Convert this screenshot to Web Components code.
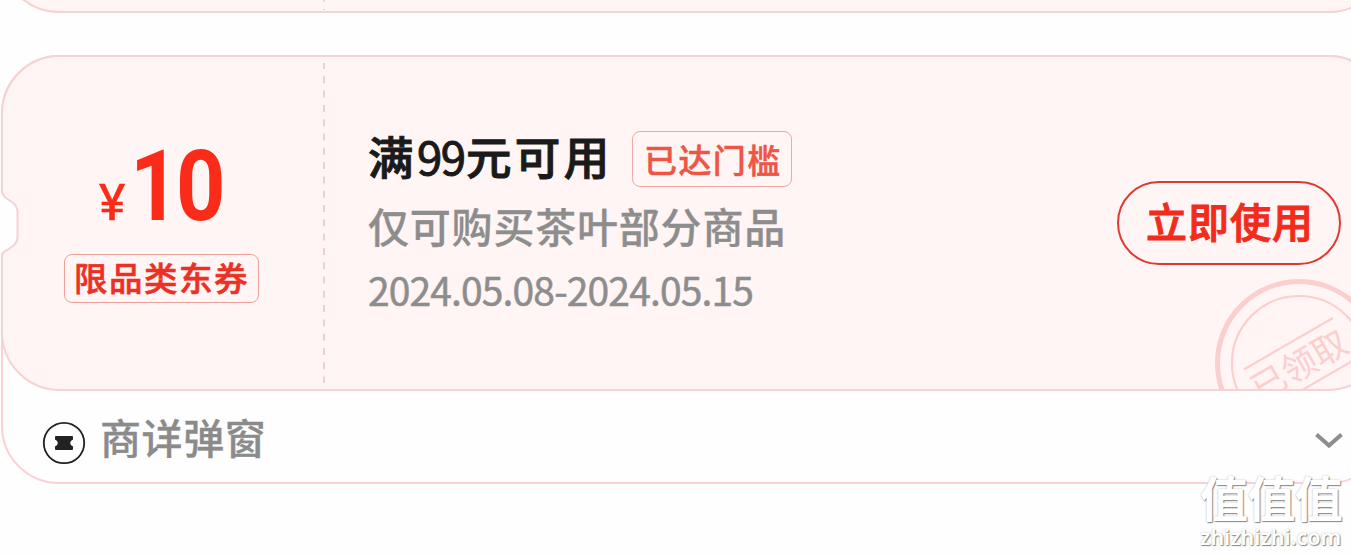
<!DOCTYPE html>
<html lang="zh-CN">
<head>
<meta charset="UTF-8">
<title>优惠券</title>
<style>
  body {
    margin: 0;
    width: 1351px;
    height: 555px;
    overflow: hidden;
    background: #fefefe;
    font-family: 'Noto Sans CJK SC', 'Noto Sans', sans-serif;
  }
  coupon-info b {
    display: inline-block;
    width: 49px;
    font-weight: 400;
    letter-spacing: -1.3px;
  }
</style>
</head>
<body>
<coupon-list>
  <coupon-card class="previous"></coupon-card>
  <coupon-card>
    <coupon-amount slot="amount" value="10">限品类东券</coupon-amount>
    <coupon-info slot="info">
      <span slot="title">满<b>99</b>元可用</span>
      <span slot="status">已达门槛</span>
      <span slot="scope">仅可购买茶叶部分商品</span>
      <span slot="date">2024.05.08-2024.05.15</span>
    </coupon-info>
    <coupon-button slot="action">立即使用</coupon-button>
    <coupon-stamp slot="stamp">已领取</coupon-stamp>
    <coupon-source slot="footer">商详弹窗</coupon-source>
  </coupon-card>
  <site-mark slot="mark"></site-mark>
</coupon-list>

<script>
/**
 * Small base class: renders the static template of an element.
 */
class BaseElement extends HTMLElement {
  connectedCallback() {
    if (this.shadowRoot) return;
    this.attachShadow({ mode: 'open' });
    this.shadowRoot.innerHTML = `<style>${this.getStyles()}</style>${this.getMarkup()}`;
  }
}

/** <coupon-list>: vertical stack of coupons, the first one scrolled off the top. */
class CouponList extends BaseElement {
  getStyles() {
    return `
      :host { display: block; position: relative; width: 1351px; height: 555px; overflow: hidden; }
      .stack { display: flex; flex-direction: column; gap: 42px; margin-top: -416px; }
    `;
  }
  getMarkup() {
    return '<div class="stack"><slot></slot></div><slot name="mark"></slot>';
  }
}

/** <coupon-card>: ticket shape, dashed divider and footer tray. */
class CouponCard extends BaseElement {
  getStyles() {
    return `
      :host {
        display: block;
        flex: none;
        position: relative;
        box-sizing: border-box;
        margin-left: 1px;
        width: 1386px;
        height: 429px;
        border: 2px solid #fbd1d6;
        border-radius: 58px;
      }
      .shape { position: absolute; left: -2px; top: -2px; }
      .ticket {
        display: grid;
        grid-template-columns: 321px 788px 1fr;
        position: relative;
        height: 332px;
        overflow: hidden;
      }
      .ticket > div { display: flex; }
      .footer { position: relative; height: 93px; }
      :host(.previous) .footer { display: none; }
    `;
  }
  getMarkup() {
    const previous = this.classList.contains('previous');
    const shape = previous
      ? '<rect x="1" y="1" width="1384" height="427" rx="57"/>'
      : `<path d="M59 1H1327A58 58 0 0 1 1385 59V277A58 58 0 0 1 1327 335H59A58 58 0 0 1 1 277V202Q1 197 6 195L12 191Q16.5 187 16.5 182V157Q16.5 151 11 147L5 143Q1 140 1 135V59A58 58 0 0 1 59 1Z"/>`;
    // covers the card border where the notch opens
    const gap = previous ? '' : '<path d="M0 137L5 143L11 147Q16 151 16 157V182Q16 187 12 191L6 195L0 199Z" fill="#fefefe" stroke="none"/>';
    const line = previous ? 'M323 0V426' : 'M323 8V328';
    return `
      <svg class="shape" width="1386" height="429" fill="#fff5f4" stroke="#f5d3d2" stroke-width="2">
        ${gap}
        ${shape}
        <path d="${line}" stroke="#edcccb" stroke-width="1.8" stroke-dasharray="7 7.3" stroke-dashoffset="${previous ? 4 : 1}"/>
      </svg>
      <div class="ticket">
        <div><slot name="amount"></slot></div>
        <div><slot name="info"></slot></div>
        <div><slot name="action"></slot></div>
        <slot name="stamp"></slot>
      </div>
      <div class="footer"><slot name="footer"></slot></div>
    `;
  }
}

/** <coupon-amount>: the discount and its category label. */
class CouponAmount extends BaseElement {
  getStyles() {
    return `
      :host { display: flex; flex-direction: column; width: 321px; color: #fa2c19; }
      .price {
        display: flex;
        align-items: baseline;
        height: 117px;
        margin: 80px 0 0 96px;
        line-height: 100px;
        font-family: Roboto, sans-serif;
      }
      .sign { width: 31px; font-size: 50px; font-weight: 400; -webkit-text-stroke: .6px currentColor; }
      .value { font-size: 98px; font-weight: 700; transform: scaleX(.88); transform-origin: left; letter-spacing: -4px; }
      .label {
        box-sizing: border-box;
        width: 195px;
        height: 49px;
        margin-left: 61px;
        padding-left: 9px;
        border: 1px solid #f0a09a;
        border-radius: 8px;
        font-size: 33.5px;
        font-weight: 500;
        line-height: 44px;
        letter-spacing: 1.5px;
        white-space: nowrap;
        color: #ed3023;
        -webkit-text-stroke: .6px currentColor;
      }
    `;
  }
  getMarkup() {
    return `
      <div class="price">
        <span class="sign">¥</span><span class="value">${this.getAttribute('value')}</span>
      </div>
      <div class="label"><slot></slot></div>
    `;
  }
}

/** <coupon-info>: conditions and validity of the coupon. */
class CouponInfo extends BaseElement {
  getStyles() {
    return `
      :host { display: block; padding: 74px 0 0 44px; white-space: nowrap; color: #8d8d8d; }
      .head { display: flex; height: 62px; }
      .title {
        width: 264px;
        font-size: 45.5px;
        font-weight: 500;
        line-height: 48px;
        letter-spacing: 3.4px;
        color: #1a1a1a;
        -webkit-text-stroke: 1px currentColor;
      }
      ::slotted(span) { display: block; }
      .status {
        box-sizing: border-box;
        width: 160px;
        height: 56px;
        padding-left: 11px;
        border: 1px solid #efa8a2;
        border-radius: 8px;
        font-size: 33px;
        font-weight: 500;
        line-height: 54px;
        letter-spacing: 1.4px;
        color: #ee5544;
        -webkit-text-stroke: .5px currentColor;
      }
      .scope { height: 65px; font-size: 41px; font-weight: 500; line-height: 65px; letter-spacing: .8px; -webkit-text-stroke: .3px currentColor; }
      .date { font-size: 39px; line-height: 62px; letter-spacing: -.87px; -webkit-text-stroke: .5px currentColor; }
    `;
  }
  getMarkup() {
    return `
      <div class="head">
        <div class="title"><slot name="title"></slot></div>
        <div class="status"><slot name="status"></slot></div>
      </div>
      <div class="scope"><slot name="scope"></slot></div>
      <div class="date"><slot name="date"></slot></div>
    `;
  }
}

class CouponButton extends BaseElement {
  getStyles() {
    return `
      :host {
        display: block;
        box-sizing: border-box;
        width: 224px;
        height: 84px;
        margin: 124px 0 0 5px;
        padding-left: 27px;
        border: 2px solid #df3a31;
        border-radius: 42px;
        font-size: 41px;
        font-weight: 500;
        line-height: 74px;
        letter-spacing: 1px;
        white-space: nowrap;
        color: #f22b1c;
        -webkit-text-stroke: 1px currentColor;
      }
    `;
  }
  getMarkup() {
    return '<slot></slot>';
  }
}

/** <coupon-stamp>: tilted round seal, cut off by the ticket edge. */
class CouponStamp extends BaseElement {
  getStyles() {
    return `
      :host { display: block; position: absolute; left: 1212px; top: 222px; }
      svg { display: block; }
    `;
  }
  getMarkup() {
    return `
      <svg width="168" height="168" fill="none" stroke="#fbcfcd">
        <circle cx="84" cy="84" r="81.5" stroke-width="5"/>
        <circle cx="84" cy="84" r="67" stroke-width="2.2"/>
        <g transform="rotate(-30 84 84)">
          <path d="M33 62H136M33 109H136" stroke-width="2.2"/>
          <text x="83" y="99" text-anchor="middle" font-size="35" fill="#fbcfcd" stroke="none">${this.textContent}</text>
        </g>
      </svg>
    `;
  }
}

/** <coupon-source>: where the coupon was found, with an expand arrow. */
class CouponSource extends BaseElement {
  getStyles() {
    return `
      :host { display: flex; height: 93px; color: #8b8b8b; }
      .icon { margin: 32px 14px 0 39px; flex: none; }
      .name {
        width: 1214px;
        font-size: 41px;
        font-weight: 500;
        line-height: 95px;
        letter-spacing: .6px;
        -webkit-text-stroke: .3px currentColor;
      }
      .arrow { margin-top: 43px; flex: none; }
    `;
  }
  getMarkup() {
    return `
      <svg class="icon" width="44" height="44">
        <circle cx="22" cy="22" r="20.2" fill="none" stroke="#222" stroke-width="1.8"/>
        <path d="M14 15H30Q31 15 31 16V18.5Q28.2 19.5 28.2 22T31 25.500V28Q31 29 30 29H14Q13 29 13 28V25.500Q15.800 24.500 15.800 22T13 18.500V16Q13 15 14 15Z" fill="#222"/>
      </svg>
      <span class="name"><slot></slot></span>
      <svg class="arrow" width="32" height="20" fill="none" stroke="#8d8d8d" stroke-width="4">
        <path d="M2.500 2.500L15 13.500L27.500 2.500"/>
      </svg>
    `;
  }
}

/** <site-mark>: white embossed mark laid over the corner of the page. */
class SiteMark extends BaseElement {
  getStyles() {
    return `
      :host {
        display: flex;
        flex-direction: column;
        position: absolute;
        left: 1200px;
        top: 470px;
        color: #fff;
        text-shadow: 1px 1px 1px #888, 0 0 2px #bbb;
        white-space: nowrap;
      }
      .name { height: 54px; font-size: 48px; font-weight: 700; line-height: 53px; letter-spacing: -.6px; }
      .site { font: 600 21.5px/26px 'Noto Sans', sans-serif; }
    `;
  }
  getMarkup() {
    return '<span class="name">值值值</span><span class="site">zhizhizhi.com</span>';
  }
}

customElements.define('coupon-list', CouponList);
customElements.define('coupon-card', CouponCard);
customElements.define('coupon-amount', CouponAmount);
customElements.define('coupon-info', CouponInfo);
customElements.define('coupon-button', CouponButton);
customElements.define('coupon-stamp', CouponStamp);
customElements.define('coupon-source', CouponSource);
customElements.define('site-mark', SiteMark);
</script>
</body>
</html>
